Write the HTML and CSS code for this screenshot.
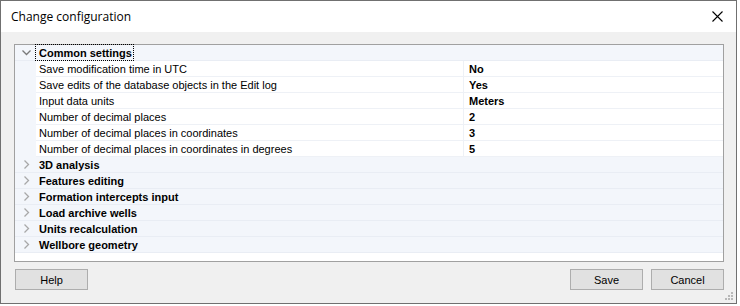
FILE: index.html
```html
<!DOCTYPE html>
<html>
<head>
<meta charset="utf-8">
<link rel="stylesheet" href="styles.css">
</head>
<body>
<div class="window">
  <div class="titlebar">
    <span class="title">Change configuration</span>
    <svg class="close" width="11" height="11" viewBox="0 0 11 11"><path d="M0.5 0.5 L10.5 10.5 M10.5 0.5 L0.5 10.5" stroke="#000" stroke-width="1.1" fill="none"/></svg>
  </div>
  <div class="content">
    <div class="grid">
      <div class="row cat">
        <div class="gutter"><svg width="9" height="6" viewBox="0 0 9 6"><path d="M0.5 0.5 L4.5 4.5 L8.5 0.5" stroke="#7a7a7a" stroke-width="1.3" fill="none"/></svg></div>
        <div class="name"><span class="focus">Common settings</span></div>
      </div>
      <div class="row prop"><div class="gutter"></div><div class="label">Save modification time in UTC</div><div class="value">No</div></div>
      <div class="row prop"><div class="gutter"></div><div class="label">Save edits of the database objects in the Edit log</div><div class="value">Yes</div></div>
      <div class="row prop"><div class="gutter"></div><div class="label">Input data units</div><div class="value">Meters</div></div>
      <div class="row prop"><div class="gutter"></div><div class="label">Number of decimal places</div><div class="value">2</div></div>
      <div class="row prop"><div class="gutter"></div><div class="label">Number of decimal places in coordinates</div><div class="value">3</div></div>
      <div class="row prop"><div class="gutter"></div><div class="label">Number of decimal places in coordinates in degrees</div><div class="value">5</div></div>
      <div class="row cat"><div class="gutter"><svg width="6" height="9" viewBox="0 0 6 9"><path d="M0.5 0.5 L4.5 4.5 L0.5 8.5" stroke="#a8a8a8" stroke-width="1.3" fill="none"/></svg></div><div class="name">3D analysis</div></div>
      <div class="row cat"><div class="gutter"><svg width="6" height="9" viewBox="0 0 6 9"><path d="M0.5 0.5 L4.5 4.5 L0.5 8.5" stroke="#a8a8a8" stroke-width="1.3" fill="none"/></svg></div><div class="name">Features editing</div></div>
      <div class="row cat"><div class="gutter"><svg width="6" height="9" viewBox="0 0 6 9"><path d="M0.5 0.5 L4.5 4.5 L0.5 8.5" stroke="#a8a8a8" stroke-width="1.3" fill="none"/></svg></div><div class="name">Formation intercepts input</div></div>
      <div class="row cat"><div class="gutter"><svg width="6" height="9" viewBox="0 0 6 9"><path d="M0.5 0.5 L4.5 4.5 L0.5 8.5" stroke="#a8a8a8" stroke-width="1.3" fill="none"/></svg></div><div class="name">Load archive wells</div></div>
      <div class="row cat"><div class="gutter"><svg width="6" height="9" viewBox="0 0 6 9"><path d="M0.5 0.5 L4.5 4.5 L0.5 8.5" stroke="#a8a8a8" stroke-width="1.3" fill="none"/></svg></div><div class="name">Units recalculation</div></div>
      <div class="row cat"><div class="gutter"><svg width="6" height="9" viewBox="0 0 6 9"><path d="M0.5 0.5 L4.5 4.5 L0.5 8.5" stroke="#a8a8a8" stroke-width="1.3" fill="none"/></svg></div><div class="name">Wellbore geometry</div></div>
    </div>
    <div class="footer">
      <button class="btn">Help</button>
      <div class="actions">
        <button class="btn">Save</button>
        <button class="btn">Cancel</button>
      </div>
    </div>
    <svg class="grip" width="9" height="9" viewBox="0 0 9 9">
      <rect x="6" y="0" width="2" height="2" fill="#b8b8b8"/>
      <rect x="3" y="3" width="2" height="2" fill="#b8b8b8"/>
      <rect x="6" y="3" width="2" height="2" fill="#b8b8b8"/>
      <rect x="0" y="6" width="2" height="2" fill="#b8b8b8"/>
      <rect x="3" y="6" width="2" height="2" fill="#b8b8b8"/>
      <rect x="6" y="6" width="2" height="2" fill="#b8b8b8"/>
    </svg>
  </div>
</div>
</body>
</html>
```
FILE: styles.css
```css
html, body {
  margin: 0;
  padding: 0;
  background: #ffffff;
}

.window {
  width: 737px;
  height: 304px;
  box-sizing: border-box;
  border: 1px solid #707070;
  display: flex;
  flex-direction: column;
  font-family: "Liberation Sans", Arial, sans-serif;
  font-size: 11px;
  color: #000;
}

.titlebar {
  height: 31px;
  flex: none;
  background: #ffffff;
  display: flex;
  align-items: center;
  justify-content: space-between;
  padding: 0 13px 0 10px;
}

.title {
  font-family: "Open Sans", "Noto Sans", sans-serif;
  font-size: 12px;
  color: #000;
}

.close {
  display: block;
}

.content {
  flex: 1;
  background: #f0f0f0;
  padding: 12px 12px 0 13px;
  position: relative;
}

.grid {
  height: 218px;
  box-sizing: border-box;
  border: 1px solid #a0a0a0;
  background: #ffffff;
}

.row {
  display: flex;
  height: 16px;
  box-sizing: border-box;
  line-height: 15px;
}

.gutter {
  width: 21px;
  flex: none;
  background: #f3f6fb;
  display: flex;
  align-items: center;
  justify-content: center;
}

.cat {
  background: #f3f6fb;
  border-bottom: 1px solid #e9edf4;
}

.cat .gutter {
  padding-left: 2px;
  box-sizing: border-box;
}

.cat .name {
  font-weight: bold;
  padding-left: 3px;
  padding-top: 1px;
  flex: 1;
  box-sizing: border-box;
}

.focus {
  display: inline-block;
  outline: 1px dotted #000;
  outline-offset: 0;
  margin-left: -3px;
  margin-top: -1px;
  padding: 1px 1px 0 3px;
  height: 14px;
}

.prop .label {
  width: 428px;
  flex: none;
  box-sizing: border-box;
  padding-left: 3px;
  padding-top: 1px;
  background: #fff;
  border-right: 1px solid #eef1f6;
  border-bottom: 1px solid #eef1f6;
  white-space: nowrap;
}

.prop .value {
  flex: 1;
  padding-left: 5px;
  padding-top: 1px;
  box-sizing: border-box;
  font-weight: bold;
  background: #fff;
  border-bottom: 1px solid #eef1f6;
}

.footer {
  display: flex;
  justify-content: space-between;
  margin-top: 7px;
  padding-left: 1px;
}

.actions {
  display: flex;
  gap: 8px;
}

.btn {
  width: 73px;
  height: 21px;
  box-sizing: border-box;
  border: 1px solid #adadad;
  background: #e1e1e1;
  font-family: "Liberation Sans", Arial, sans-serif;
  font-size: 11px;
  color: #000;
  padding: 0;
  margin: 0;
}

.grip {
  position: absolute;
  right: 2px;
  bottom: 2px;
}
```
